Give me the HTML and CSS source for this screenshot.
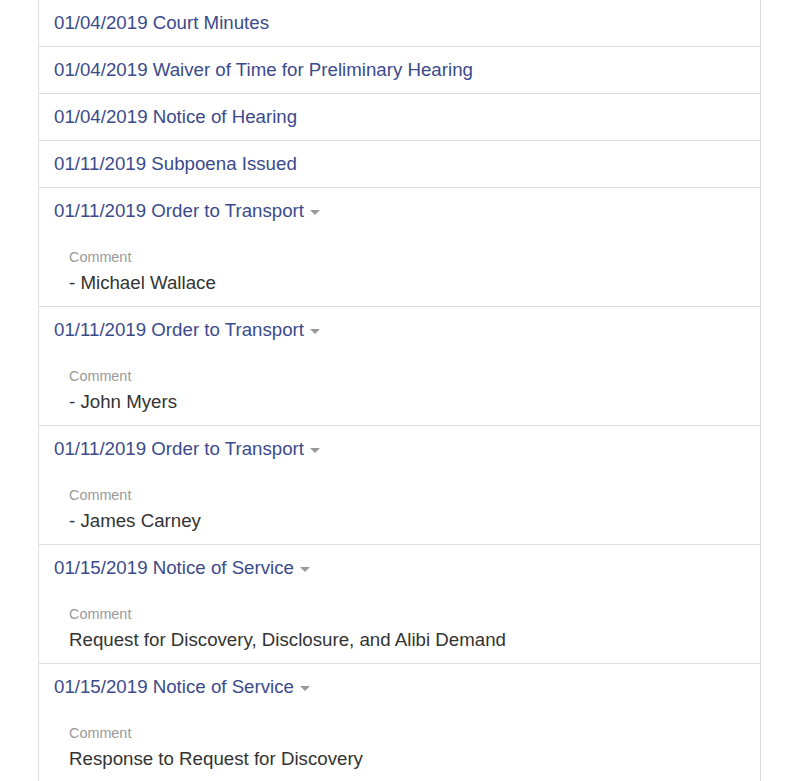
FILE: index.html
```html
<!DOCTYPE html>
<html>
<head>
<meta charset="utf-8">
<link rel="stylesheet" href="styles.css">
</head>
<body>
<div class="list">
  <div class="item"><a class="title" href="#">01/04/2019 Court Minutes</a></div>
  <div class="item"><a class="title" href="#">01/04/2019 Waiver of Time for Preliminary Hearing</a></div>
  <div class="item"><a class="title" href="#">01/04/2019 Notice of Hearing</a></div>
  <div class="item"><a class="title" href="#">01/11/2019 Subpoena Issued</a></div>
  <div class="item">
    <a class="title" href="#">01/11/2019 Order to Transport <span class="caret"></span></a>
    <div class="details"><div class="label">Comment</div><div class="comment">- Michael Wallace</div></div>
  </div>
  <div class="item">
    <a class="title" href="#">01/11/2019 Order to Transport <span class="caret"></span></a>
    <div class="details"><div class="label">Comment</div><div class="comment">- John Myers</div></div>
  </div>
  <div class="item">
    <a class="title" href="#">01/11/2019 Order to Transport <span class="caret"></span></a>
    <div class="details"><div class="label">Comment</div><div class="comment">- James Carney</div></div>
  </div>
  <div class="item">
    <a class="title" href="#">01/15/2019 Notice of Service <span class="caret"></span></a>
    <div class="details"><div class="label">Comment</div><div class="comment">Request for Discovery, Disclosure, and Alibi Demand</div></div>
  </div>
  <div class="item">
    <a class="title" href="#">01/15/2019 Notice of Service <span class="caret"></span></a>
    <div class="details"><div class="label">Comment</div><div class="comment">Response to Request for Discovery</div></div>
  </div>
</div>
</body>
</html>
```
FILE: styles.css
```css
html, body {
  margin: 0;
  padding: 0;
  background: #fff;
}
body {
  font-family: "Liberation Sans", Arial, sans-serif;
  color: #333;
  overflow: hidden;
}
.list {
  box-sizing: border-box;
  width: 723px;
  margin: -1px 0 0 38px;
  border-left: 1px solid #ddd;
  border-right: 1px solid #ddd;
}
.item {
  border-top: 1px solid #ddd;
}
.title {
  display: block;
  padding: 12px 15px;
  font-size: 18.7px;
  line-height: 22px;
  color: #3b4a8b;
  text-decoration: none;
}
.caret {
  display: inline-block;
  width: 0;
  height: 0;
  margin-left: 1px;
  vertical-align: middle;
  border-top: 5px solid #999;
  border-left: 5px solid transparent;
  border-right: 5px solid transparent;
}
.details {
  padding: 13px 30px 12px;
}
.label {
  font-size: 14.4px;
  line-height: 20px;
  color: #999;
  margin-bottom: 5px;
}
.comment {
  font-size: 18.7px;
  line-height: 22px;
  color: #333;
}
```
